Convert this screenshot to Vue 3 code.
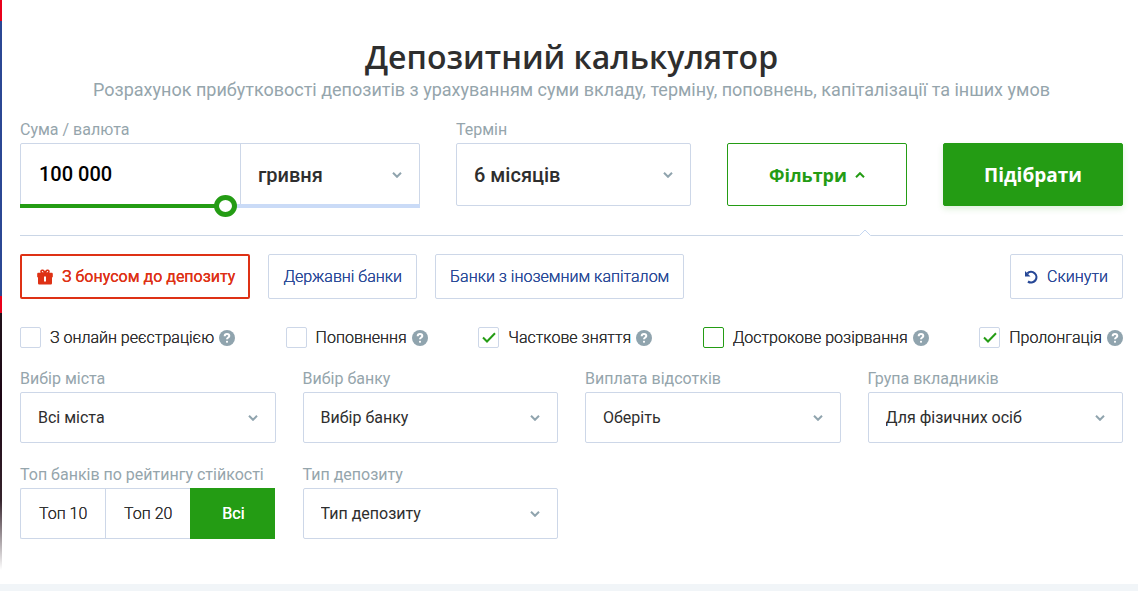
<script setup>
import { computed, ref } from 'vue'

const amount = ref('100 000')
const slider = ref(515)
const sliderFill = computed(() => ({ '--fill': slider.value / 10 + '%' }))

const flags = ref([
  { id: 'online', text: 'З онлайн реєстрацією', on: false },
  { id: 'refill', text: 'Поповнення', on: false },
  { id: 'partial', text: 'Часткове зняття', on: true },
  { id: 'early', text: 'Дострокове розірвання', on: false, active: true },
  { id: 'prolong', text: 'Пролонгація', on: true }
])

const selects = [
  { id: 'city', label: 'Вибір міста', value: 'Всі міста' },
  { id: 'bank', label: 'Вибір банку', value: 'Вибір банку' },
  { id: 'payout', label: 'Виплата відсотків', value: 'Оберіть' },
  { id: 'group', label: 'Група вкладників', value: 'Для фізичних осіб' }
]

const tops = ['Топ 10', 'Топ 20', 'Всі']
const top = ref('Всі')
</script>

<template>
  <div class="page">
    <div class="strip"></div>
    <main class="calc">
      <h1>Депозитний калькулятор</h1>
      <p class="lead">Розрахунок прибутковості депозитів з урахуванням суми вкладу, терміну, поповнень, капіталізації та інших умов</p>

      <div class="main-row">
        <div class="field">
          <label class="label" for="amount">Сума / валюта</label>
          <div class="sum">
            <input id="amount" v-model="amount" class="amount" type="text">
            <div class="select big currency">
              <select aria-label="Валюта"><option>гривня</option></select>
              <svg class="chev" viewBox="0 0 10 6"><path d="M1 .8l4 4 4-4" /></svg>
            </div>
            <input v-model="slider" class="range" type="range" min="0" max="1000" aria-label="Сума вкладу" :style="sliderFill">
          </div>
        </div>
        <div class="field">
          <label class="label" for="term">Термін</label>
          <div class="select big boxed">
            <select id="term"><option>6 місяців</option></select>
            <svg class="chev" viewBox="0 0 10 6"><path d="M1 .8l4 4 4-4" /></svg>
          </div>
        </div>
        <button class="btn filters" type="button">
          Фільтри
          <svg class="up" viewBox="0 0 10 6"><path d="M1 5.2l4-4 4 4" /></svg>
        </button>
        <button class="btn submit" type="button">Підібрати</button>
      </div>

      <div class="divider">
        <svg class="notch" viewBox="0 0 12 7"><path class="notch-fill" d="M0 7L6 1l6 6z" /><path class="notch-line" d="M.5 6.5L6 1l5.500 5.500" /></svg>
      </div>

      <div class="chips">
        <button class="chip bonus" type="button">
          <svg class="gift" viewBox="0 0 16 16">
            <path d="M3.600 3.800C2.600 2 3.600.5 5.200.5 6.600.5 7.500 1.200 8 2.200 8.500 1.200 9.400.5 10.800.5c1.600 0 2.600 1.500 1.600 3.300H14.500c.8 0 1.300.5 1.300 1.200v3.200H15V14c0 1-.6 1.500-1.500 1.500h-11C1.600 15.500 1 15 1 14V8.200H.2V5c0-.7.5-1.200 1.300-1.200zM5 2.200c-.6.4 0 1.200 1.500 1.300C6.200 2.500 5.600 1.900 5 2.200zm6 0c-.6-.3-1.200.3-1.500 1.300 1.500-.1 2.100-.9 1.500-1.300zM7 7.500v5h2v-5z" fill-rule="evenodd" />
          </svg>
          З бонусом до депозиту
        </button>
        <button class="chip" type="button">Державні банки</button>
        <button class="chip" type="button">Банки з іноземним капіталом</button>
        <button class="chip reset" type="button">
          <svg class="undo" viewBox="0 0 14 14"><path class="arc" d="M2.300 3.500A5.300 5.300 0 1 1 3 11.500" /><path class="head" d="M0 1v5.500h5.500z" /></svg>
          Скинути
        </button>
      </div>

      <div class="checks">
        <div v-for="f in flags" :key="f.id" class="check">
          <label class="check-label">
            <input v-model="f.on" type="checkbox" :class="{ active: f.active }">
            <svg v-if="f.on" class="tick" viewBox="0 0 14 11"><path d="M1 5.500l4 4L13 1.300" /></svg>
            {{ f.text }}
          </label>
          <button class="help" type="button" :aria-label="'Довідка: ' + f.text">
            <svg viewBox="0 0 16 16">
              <circle cx="8" cy="8" r="8" />
              <path d="M5.700 6.200C5.700 4.700 6.700 3.900 8 3.900s2.300.8 2.300 2C10.300 7.500 8 7.600 8 9.300" />
              <rect x="7" y="10.700" width="2" height="2" rx=".7" />
            </svg>
          </button>
        </div>
      </div>

      <div class="grid">
        <div v-for="s in selects" :key="s.id" class="field">
          <label class="label" :for="s.id">{{ s.label }}</label>
          <div class="select boxed">
            <select :id="s.id"><option>{{ s.value }}</option></select>
            <svg class="chev" viewBox="0 0 10 6"><path d="M1 .8l4 4 4-4" /></svg>
          </div>
        </div>
        <div class="field">
          <span id="top-label" class="label">Топ банків по рейтингу стійкості</span>
          <div class="tabs" role="group" aria-labelledby="top-label">
            <button v-for="t in tops" :key="t" type="button" class="tab" :class="{ on: t === top }" @click="top = t">{{ t }}</button>
          </div>
        </div>
        <div class="field">
          <label class="label" for="kind">Тип депозиту</label>
          <div class="select boxed">
            <select id="kind"><option>Тип депозиту</option></select>
            <svg class="chev" viewBox="0 0 10 6"><path d="M1 .8l4 4 4-4" /></svg>
          </div>
        </div>
      </div>
    </main>
  </div>
</template>

<style>
body {
  background: #f1f5f8;
}
</style>

<style scoped>
* {
  box-sizing: border-box;
}
.page {
  display: grid;
  grid-template-columns: 2px 1fr;
  color: #2e2e2e;
  font: 16px/20px Roboto, "Noto Sans", sans-serif;
}
.strip {
  background: linear-gradient(#e9001b 0 21px, #2b4794 21px 262px, #2b4794 296px, #e9001b 296px 313px, #20101a 313px 340px, #1c0414 400px, #35232c 500px, #fff 570px);
}
.calc {
  background: #fff;
  padding: 37px 15px 45px 18px;
}
h1 {
  margin: 0;
  text-align: center;
  font: 600 32px/40px "Open Sans", "Noto Sans", sans-serif;
}
.lead {
  margin: 0;
  padding-top: 2px;
  text-align: center;
  font-size: 18px;
  line-height: 22px;
  color: #95a5ac;
}
.main-row {
  display: grid;
  grid-template-columns: 400fr 235fr 180fr 180fr;
  gap: 36px;
  align-items: end;
  margin-top: 19px;
}
.field {
  min-width: 0;
}
.label {
  display: block;
  height: 23px;
  color: #95a5ac;
  white-space: nowrap;
}
input,
select,
button {
  margin: 0;
  font: inherit;
  color: inherit;
  outline: none;
}
.sum {
  position: relative;
  display: grid;
  grid-template-columns: 220fr 180fr;
  height: 63px;
  border: 1px solid #cdd7e8;
  border-radius: 2px;
}
.amount {
  min-width: 0;
  border: 0;
  background: none;
  padding: 0 18px 2px;
  font-size: 20px;
  font-weight: 500;
  color: #000;
}
.currency {
  border-left: 1px solid #cdd7e8;
}
.range {
  appearance: none;
  position: absolute;
  left: -1px;
  right: -1px;
  bottom: -12px;
  width: calc(100% + 2px);
  height: 22px;
  background: linear-gradient(#249c14, #249c14) 0 9px / var(--fill) 4px no-repeat,
    linear-gradient(#cadbf7, #cadbf7) 0 9px / 100% 4px no-repeat;
}
.range::-webkit-slider-thumb {
  appearance: none;
  box-sizing: border-box;
  width: 23px;
  height: 22px;
  border: 5px solid #249c14;
  border-radius: 50%;
  background: #fff;
}
.select {
  position: relative;
  height: 51px;
}
.select.big {
  height: 100%;
  font-size: 20px;
  font-weight: 500;
}
.boxed {
  border: 1px solid #cdd7e8;
  border-radius: 2px;
}
.select.big.boxed {
  height: 63px;
}
.select select {
  appearance: none;
  display: block;
  width: 100%;
  height: 100%;
  border: 0;
  background: none;
  padding: 0 17px;
}
.chev {
  position: absolute;
  right: 17px;
  top: 50%;
  width: 10px;
  height: 6px;
  margin-top: -3px;
  pointer-events: none;
}
.chev path,
.up path {
  fill: none;
  stroke: #90a4ae;
  stroke-width: 2;
}
.btn {
  display: flex;
  align-items: center;
  justify-content: center;
  height: 63px;
  border: 1px solid #249c14;
  border-radius: 2px;
  background: #fff;
  padding: 0;
  font: 700 19px/24px "Open Sans", "Noto Sans", sans-serif;
  color: #249c14;
}
.filters {
  font-size: 18px;
}
.up {
  width: 10px;
  height: 6px;
  margin-left: 8px;
}
.up path {
  stroke: #249c14;
}
.submit {
  background: #249c14;
  color: #fff;
  box-shadow: 0 3px 6px rgba(36, 156, 20, 0.15);
}
.divider {
  position: relative;
  height: 1px;
  margin-top: 29px;
  background: #cad6e6;
}
.notch {
  position: absolute;
  right: 252px;
  bottom: 0;
  width: 12px;
  height: 7px;
}
.notch-fill {
  fill: #fff;
}
.notch-line {
  fill: none;
  stroke: #c5d7f2;
}
.chips {
  display: flex;
  gap: 18px;
  margin-top: 18px;
}
.chip {
  display: flex;
  align-items: center;
  height: 45px;
  border: 1px solid #cdd7e8;
  border-radius: 2px;
  background: #fff;
  padding: 0 14px;
  color: #264796;
  white-space: nowrap;
}
.chip,
.check-label,
.tab {
  font-weight: 300;
  text-shadow: 0 0 0 currentColor;
}
.bonus {
  border: 2px solid #de3115;
  padding: 0 13px 0 15px;
  color: #de3115;
  font-weight: 400;
}
.gift {
  width: 16px;
  height: 16px;
  margin-right: 9px;
  fill: #de3115;
}
.reset {
  margin-left: auto;
}
.undo {
  width: 14px;
  height: 14px;
  margin-right: 8px;
}
.arc {
  fill: none;
  stroke: #264796;
  stroke-width: 2.200;
}
.head {
  fill: #264796;
}
.checks {
  display: flex;
  justify-content: space-between;
  margin-top: 28px;
}
.check {
  display: flex;
  align-items: center;
  gap: 5px;
}
.check-label {
  position: relative;
  display: flex;
  align-items: center;
  gap: 9px;
  white-space: nowrap;
}
.check-label input {
  appearance: none;
  width: 21px;
  height: 21px;
  border: 1px solid #cdd7e8;
  border-radius: 2px;
  background: #fff;
}
.check-label input.active {
  border-color: #249c14;
}
.tick {
  position: absolute;
  left: 4px;
  top: 5px;
  width: 14px;
  height: 11px;
  pointer-events: none;
}
.tick path {
  fill: none;
  stroke: #249c14;
  stroke-width: 2;
}
.help {
  display: flex;
  border: 0;
  background: none;
  padding: 0;
}
.help svg {
  width: 16px;
  height: 16px;
}
.help circle {
  fill: #90a4ae;
}
.help path {
  fill: none;
  stroke: #fff;
  stroke-width: 2;
}
.help rect {
  fill: #fff;
}
.grid {
  display: grid;
  grid-template-columns: repeat(4, minmax(0, 1fr));
  gap: 22px 27px;
  margin-top: 21px;
}
.tabs {
  display: grid;
  grid-template-columns: repeat(3, 1fr);
  height: 51px;
}
.tab {
  border: 1px solid #cdd7e8;
  border-right: 0;
  background: #fff;
  padding: 0;
}
.tab:first-child {
  border-radius: 2px 0 0 2px;
}
.tab.on {
  border-color: #249c14;
  background: #249c14;
  color: #fff;
  font-weight: 400;
}
</style>
